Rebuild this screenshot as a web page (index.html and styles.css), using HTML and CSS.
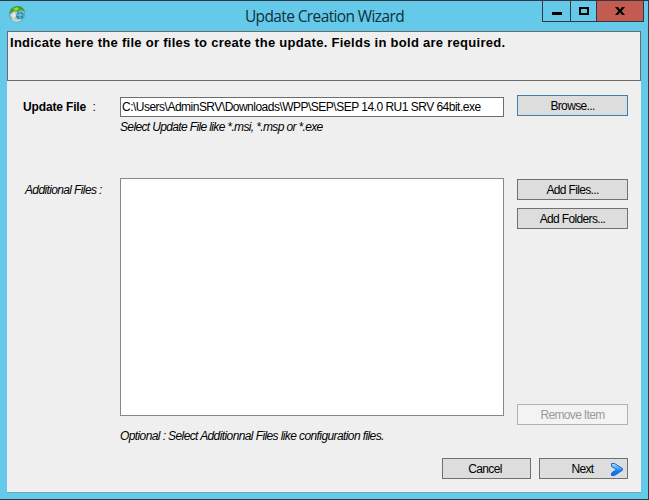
FILE: index.html
```html
<!DOCTYPE html>
<html lang="en">
<head>
<meta charset="utf-8">
<title>Update Creation Wizard</title>
<link rel="stylesheet" href="styles.css">
</head>
<body>
<div class="window">
  <header class="titlebar">
    <svg class="app-icon" width="18" height="18" viewBox="0 0 18 18">
      <circle cx="9" cy="9.200" r="8" fill="#5f9cac"/>
      <circle cx="9" cy="9" r="7.200" fill="#a9c9c6"/>
      <path d="M1.500 8C2 3 6 1 10 1c4 0 6.500 3 7 6l-4-2-3 2-4-1-4 3z" fill="#45a032"/>
      <path d="M5 4l4-2 2 2-3 2z" fill="#a4d63c"/>
      <path d="M9 8l4-2 3 3-1 4-4 2-3-3z" fill="#2388b5"/>
      <path d="M12 6v7M9 10h6" stroke="#83d2ed" stroke-width="1"/>
      <path d="M3 10l3-3 2 3-2 4z" fill="#e3e9df"/>
      <path d="M4 14q5 4 9 0" stroke="#e4dfc3" stroke-width="1.5" fill="none"/>
    </svg>
    <h1 class="title">Update Creation Wizard</h1>
    <div class="controls">
      <span class="control minimize"><svg width="10" height="3"><path d="M0 0h10v3H0z"/></svg></span>
      <span class="control maximize"><svg width="10" height="8"><path d="M1 1h8v6H1z" fill="none" stroke="#000" stroke-width="2"/></svg></span>
      <span class="control close"><svg width="10" height="8"><path d="M0 0h3l2 2.400L7 0h3L6.600 4 10 8H7L5 5.600 3 8H0l3.400-4z"/></svg></span>
    </div>
  </header>
  <main class="client">
    <div class="banner"><span class="banner-text">Indicate here the file or files to create the update. Fields in bold are required.</span></div>
    <div class="form">
      <div class="label bold-label"><b>Update File</b> &nbsp;:</div>
      <div class="field">
        <div class="textbox"><span class="path">C:\Users\AdminSRV\Downloads\WPP\SEP\SEP 14.0 RU1 SRV 64bit.exe</span></div>
        <div class="hint hint-file">Select Update File like *.msi, *.msp or *.exe</div>
      </div>
      <div class="actions browse-actions"><button class="button focused">Browse...</button></div>
      <div class="label optional-label">Additional Files :</div>
      <div class="field">
        <div class="listbox"></div>
        <div class="hint hint-optional">Optional : Select Additionnal Files like configuration files.</div>
      </div>
      <div class="actions list-actions">
        <button class="button add-files">Add Files...</button>
        <button class="button add-folders">Add Folders...</button>
        <button class="button remove" disabled>Remove Item</button>
      </div>
    </div>
    <footer class="footer">
      <button class="button cancel">Cancel</button>
      <button class="button next"><span>Next</span>
        <svg class="arrow" width="14" height="15" viewBox="0 0 14 15">
          <defs><linearGradient id="blue" x1="0" y1="0" x2="0" y2="1"><stop offset="0" stop-color="#b5e1ff"/><stop offset=".45" stop-color="#3c9cf5"/><stop offset=".7" stop-color="#0877f2"/></linearGradient></defs>
          <path d="M1.500 1.500h3l8 5v1.700L4.500 13.500h-3v-2.500L6.500 7.500l-5-3z" fill="url(#blue)" stroke="#1769cf" stroke-width="1"/>
        </svg>
      </button>
    </footer>
  </main>
</div>
</body>
</html>
```
FILE: styles.css
```css
* { box-sizing: border-box; }
body { margin: 0; font: 12px/14px "Liberation Sans", Arial, sans-serif; color: #000; overflow: hidden; }
.window { width: 649px; height: 500px; background: #65c9e9; border: solid #333840; border-width: 1px 1px 1px 0; padding: 0 6px 6px 7px; }
.titlebar { height: 29px; display: grid; grid-template-columns: 1fr auto 1fr; position: relative; }
.app-icon { margin: 4px 0 0 1px; }
.title { margin: 4px 0 0; font: 15.5px/22px "Open Sans", "Noto Sans", sans-serif; letter-spacing: -.62px; color: #10303c; white-space: nowrap; }
.controls { position: absolute; right: -2px; top: -1px; height: 22px; display: flex; border: 1px solid #333840; }
.control { display: flex; align-items: center; justify-content: center; width: 28px; border-right: 1px solid #333840; }
.maximize { width: 26px; }
.minimize { padding-top: 4px; }
.close { width: 46px; border: 0; background: #c35b51; }
.client { width: 634px; height: 462px; margin-top: 1px; background: #efefef; border-bottom: 1px solid #62afc4; display: flex; flex-direction: column; }
.banner { height: 50px; border: 1px solid #6b6b6b; padding: 4px 2px; white-space: nowrap; font-weight: bold; font-size: 13px; }
.banner-text { letter-spacing: .28px; }
.form { display: grid; grid-template-columns: 113px 384px 111px; grid-template-rows: 81px 266px; padding-top: 16px; }
.label { white-space: nowrap; }
.bold-label { padding: 3px 0 0 16px; letter-spacing: -.15px; }
.optional-label { padding: 5px 0 0 18px; font-style: italic; letter-spacing: -.63px; }
.field { min-width: 0; }
.textbox { height: 20px; background: #fff; border: 1px solid #6d6d70; padding: 2px 1px; white-space: nowrap; }
.path { letter-spacing: -.51px; }
.hint { font-style: italic; white-space: nowrap; letter-spacing: -.6px; }
.hint-file { margin-top: 3px; letter-spacing: -.64px; }
.listbox { height: 238px; background: #fff; border: 1px solid #828790; }
.hint-optional { margin-top: 13px; }
.actions { margin-left: 13px; width: 111px; display: flex; flex-direction: column; }
.browse-actions { margin-top: -2px; }
.list-actions { padding-top: 1px; height: 247px; }
.button { height: 21px; border: 1px solid #707070; background: #dddddd; padding: 0; font: 12px/14px "Liberation Sans", Arial, sans-serif; color: #000; letter-spacing: -.65px; white-space: nowrap; }
.focused { border-color: #3f7fae; }
.add-folders { margin-top: 8px; }
.remove { margin-top: auto; background: #f3f3f3; border-color: #b2b2b2; color: #9b9b9b; }
.footer { display: flex; gap: 8px; justify-content: flex-end; padding-right: 13px; margin-top: 14px; }
.footer .button { width: 89px; }
.cancel { padding-right: 3px; }
.next { position: relative; padding-right: 2px; }
.arrow { position: absolute; right: 3px; top: 3px; }
```
